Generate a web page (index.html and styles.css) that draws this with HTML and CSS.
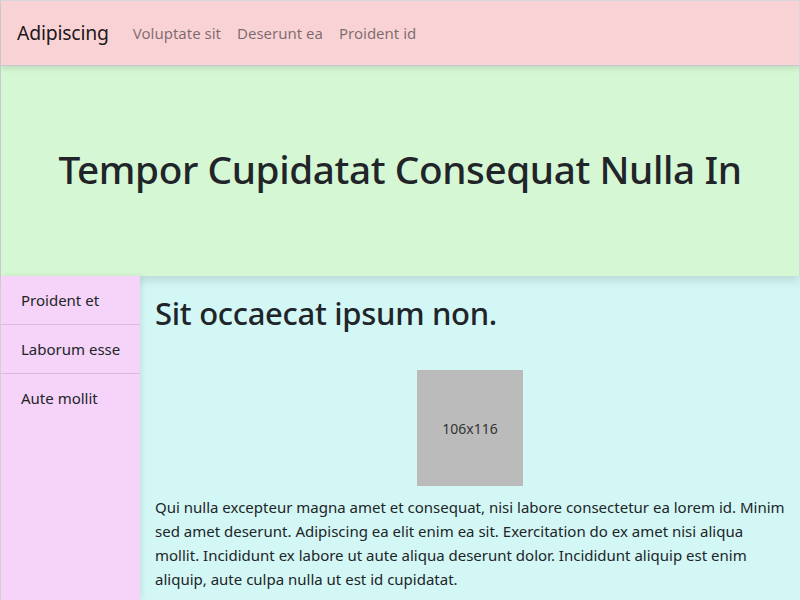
FILE: index.html
```html
<!DOCTYPE html>
<html lang="la">
<head>
<meta charset="utf-8">
<title>Adipiscing</title>
<link rel="stylesheet" href="styles.css">
</head>
<body>
<div class="page">
  <nav class="navbar">
    <a class="brand" href="#">Adipiscing</a>
    <ul class="nav-links">
      <li><a href="#">Voluptate sit</a></li>
      <li><a href="#">Deserunt ea</a></li>
      <li><a href="#">Proident id</a></li>
    </ul>
  </nav>
  <header class="hero">
    <h1 class="hero-title">Tempor Cupidatat Consequat Nulla In</h1>
  </header>
  <div class="body-row">
    <aside class="sidebar">
      <a class="side-item" href="#">Proident et</a>
      <a class="side-item" href="#">Laborum esse</a>
      <a class="side-item" href="#">Aute mollit</a>
    </aside>
    <main class="content">
      <h2 class="content-title">Sit occaecat ipsum non.</h2>
      <div class="figure-wrap">
        <div class="placeholder">106x116</div>
      </div>
      <p class="text">Qui nulla excepteur magna amet et consequat, nisi labore consectetur ea lorem id. Minim sed amet deserunt. Adipiscing ea elit enim ea sit. Exercitation do ex amet nisi aliqua mollit. Incididunt ex labore ut aute aliqua deserunt dolor. Incididunt aliquip est enim aliquip, aute culpa nulla ut est id cupidatat.</p>
    </main>
  </div>
</div>
</body>
</html>
```

FILE: styles.css
```css
* { box-sizing: border-box; }
html, body {
  margin: 0;
  padding: 0;
  height: 100%;
}
body {
  font-family: "Noto Sans", "Open Sans", sans-serif;
  font-size: 16px;
  line-height: 1.5;
  color: #212529;
  background: #d2f7f4;
}
.page {
  display: flex;
  flex-direction: column;
  min-height: 100%;
  border-left: 1px solid #d4d4d8;
}
.navbar {
  position: relative;
  z-index: 3;
  display: flex;
  align-items: center;
  height: 66px;
  padding: 0 16px;
  background: #f8d2d5;
  border-top: 1px solid #d8d8dc;
  border-right: 1px solid #d8d8dc;
  border-bottom: 1px solid #c8c8d0;
  box-shadow: 0 2px 6px rgba(0,0,0,0.12);
}
.brand {
  font-size: 19.4px;
  color: rgba(0,0,0,0.9);
  text-decoration: none;
  margin-right: 16px;
  letter-spacing: -0.2px;
}
.nav-links {
  display: flex;
  list-style: none;
  margin: 0;
  padding: 0;
}
.nav-links a {
  display: block;
  padding: 8px;
  color: rgba(0,0,0,0.5);
  text-decoration: none;
  font-size: 15px;
}
.hero {
  position: relative;
  z-index: 1;
  height: 210px;
  display: flex;
  align-items: center;
  justify-content: center;
  background: #d5f7d3;
  border-right: 1px solid #d8d8dc;
  box-shadow: 0 4px 10px rgba(0,0,0,0.12);
}
.hero-title {
  margin: 0 0 4px;
  font-size: 38.7px;
  font-weight: 500;
  line-height: 1.2;
  letter-spacing: -0.4px;
}
.body-row {
  flex: 1;
  display: flex;
}
.sidebar {
  position: relative;
  z-index: 2;
  width: 139px;
  flex: none;
  display: flex;
  flex-direction: column;
  background: #f6d3f8;
  box-shadow: 2px 0 6px rgba(0,0,0,0.08);
}
.side-item {
  display: block;
  padding: 12px 0 12px 20px;
  border-bottom: 1px solid #dcbadf;
  color: #212529;
  text-decoration: none;
  font-size: 15px;
  line-height: 24px;
  white-space: nowrap;
}
.side-item:last-child { border-bottom: none; }
.content {
  flex: 1;
  padding: 18px 15px 0 15px;
}
.content-title {
  margin: 0;
  font-size: 31px;
  font-weight: 500;
  line-height: 38px;
  letter-spacing: -0.3px;
}
.figure-wrap {
  display: flex;
  justify-content: center;
  margin: 38px 0 9px;
}
.placeholder {
  width: 106px;
  height: 116px;
  background: #bbbbbb;
  display: flex;
  align-items: center;
  justify-content: center;
  color: #333;
  font-size: 14px;
}
.text {
  margin: 0;
  font-size: 15px;
  line-height: 24px;
}
```
